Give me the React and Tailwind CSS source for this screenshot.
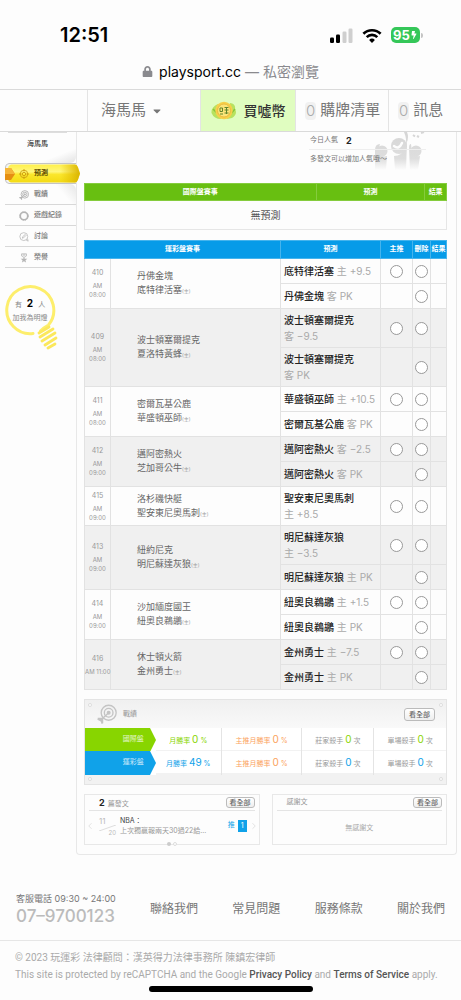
import { FaLock, FaCaretDown, FaBolt } from 'react-icons/fa';
import { LuChevronLeft, LuChevronRight } from 'react-icons/lu';
import clsx from 'clsx';

const games = [
  {
    no: '410', time: '08:00', away: '丹佛金塊', home: '底特律活塞',
    picks: [
      { team: '底特律活塞', side: '主', line: '+9.5', main: true },
      { team: '丹佛金塊', side: '客', line: 'PK' },
    ],
  },
  {
    no: '409', time: '08:00', away: '波士頓塞爾提克', home: '夏洛特黃蜂',
    picks: [
      { team: '波士頓塞爾提克', side: '客', line: '−9.5', main: true, wrap: true },
      { team: '波士頓塞爾提克', side: '客', line: 'PK', wrap: true },
    ],
  },
  {
    no: '411', time: '08:00', away: '密爾瓦基公鹿', home: '華盛頓巫師',
    picks: [
      { team: '華盛頓巫師', side: '主', line: '+10.5', main: true },
      { team: '密爾瓦基公鹿', side: '客', line: 'PK' },
    ],
  },
  {
    no: '412', time: '09:00', away: '邁阿密熱火', home: '芝加哥公牛',
    picks: [
      { team: '邁阿密熱火', side: '客', line: '−2.5', main: true },
      { team: '邁阿密熱火', side: '客', line: 'PK' },
    ],
  },
  {
    no: '415', time: '09:00', away: '洛杉磯快艇', home: '聖安東尼奧馬刺',
    picks: [{ team: '聖安東尼奧馬刺', side: '主', line: '+8.5', main: true, wrap: true }],
  },
  {
    no: '413', time: '09:00', away: '紐約尼克', home: '明尼蘇達灰狼',
    picks: [
      { team: '明尼蘇達灰狼', side: '主', line: '−3.5', main: true, wrap: true },
      { team: '明尼蘇達灰狼', side: '主', line: 'PK' },
    ],
  },
  {
    no: '414', time: '09:00', away: '沙加緬度國王', home: '紐奧良鵜鶘',
    picks: [
      { team: '紐奧良鵜鶘', side: '主', line: '+1.5', main: true },
      { team: '紐奧良鵜鶘', side: '主', line: 'PK' },
    ],
  },
  {
    no: '416', time: '11:00', oneLine: true, away: '休士頓火箭', home: '金州勇士',
    picks: [
      { team: '金州勇士', side: '主', line: '−7.5', main: true },
      { team: '金州勇士', side: '主', line: 'PK' },
    ],
  },
];

function StatusBar() {
  return (
    <div className="flex h-[58px] items-center justify-between pt-3 pr-[38px] pl-[60px]">
      <span className="text-[20px] leading-6 font-semibold text-black">12:51</span>
      <div className="flex items-center gap-[9px]">
        <svg viewBox="0 0 23 15" className="h-[15px] w-[23px]">
          <rect x="0" y="9.5" width="4" height="5.5" rx="1.2" fill="#000" />
          <rect x="6" y="6.5" width="4" height="8.5" rx="1.2" fill="#000" />
          <rect x="12.5" y="3.500" width="4" height="11.5" rx="1.2" fill="#cfcfcf" />
          <rect x="18.5" y="0.500" width="4" height="14.5" rx="1.2" fill="#cfcfcf" />
        </svg>
        <svg viewBox="0 0 20 15" className="h-[15px] w-5">
          <path d="M1.4 5.8A12.2 12.2 0 0 1 18.6 5.8" fill="none" stroke="#000" strokeWidth="2.7" />
          <path d="M4.7 9.1a7.5 7.5 0 0 1 10.6 0" fill="none" stroke="#000" strokeWidth="2.6" />
          <path d="M10 15l-2.9-3a4.1 4.1 0 0 1 5.8 0z" fill="#000" />
        </svg>
        <div className="flex items-center gap-px">
          <div className="flex h-4 w-[29px] items-center justify-center rounded-[5px] bg-[#35c759] text-white">
            <span className="text-[13px] leading-4 font-bold">95</span>
            <FaBolt className="size-2" />
          </div>
          <span className="h-[5px] w-[2px] rounded-r-full bg-[#c4c4c4]" />
        </div>
      </div>
    </div>
  );
}

function Coin() {
  return (
    <svg viewBox="0 0 26 19" className="h-[19px] w-[26px]">
      <path d="M7 3Q0 6 .5 12Q3 18 10 18zM19 2Q25 3 24 8Q27 13 21 17L16 18z" fill="#b7e25f" />
      <path d="M2 8L8 14M24 8L18 15" stroke="#86c63c" strokeWidth="1.5" />
      <circle cx="13" cy="9.5" r="8.7" fill="#f6d04a" />
      <circle cx="13" cy="9.5" r="6.5" fill="#fbe57a" stroke="#e6b238" strokeWidth=".8" />
      <path d="M9 7h2.5v3.500H9zM13.500 6.500h4M13.500 9h4M13.500 12h4M15.500 6v7M9 13h3" fill="none" stroke="#61832b" strokeWidth="1" />
    </svg>
  );
}

function TopNav() {
  return (
    <nav className="grid h-[43px] grid-cols-[88fr_113fr_95fr_93fr_72fr] divide-x divide-[#e4e4e4] border-y border-[#dadada] text-[15px] text-[#777]">
      <span />
      <button className="flex items-center gap-[5px] pl-[13px]">
        海馬馬
        <FaCaretDown className="size-3" />
      </button>
      <a href="#coin" className="flex items-center justify-center gap-[7px] bg-[#e0fdc0] text-[14px] font-medium text-[#333]">
        <Coin />
        買噓幣
      </a>
      <a href="#cart" className="flex items-center gap-1 pl-[9px] whitespace-nowrap">
        <span className="rounded-sm bg-[#f1f1f1] px-px leading-[18px] font-light text-[#aaa]">0</span>
        購牌清單
      </a>
      <a href="#messages" className="flex items-center gap-1 pl-[9px] whitespace-nowrap">
        <span className="rounded-sm bg-[#f1f1f1] px-px leading-[18px] font-light text-[#aaa]">0</span>
        訊息
      </a>
    </nav>
  );
}

function TargetIcon({ thin }) {
  return (
    <svg viewBox="0 0 24 24" className="size-full" fill="none" stroke="currentColor" strokeWidth={thin ? 1.6 : 2.2}>
      <circle cx="14" cy="10.5" r="9" />
      <circle cx="14" cy="10.5" r="5.2" />
      <circle cx="14" cy="10.5" r="1.6" fill="currentColor" />
      <path d="M14 10.5L5 19" />
      <path d="M1 16.500h6.500V23l-2 1-1-3-4-2z" fill="currentColor" stroke="none" />
    </svg>
  );
}

const menu = [
  { label: '戰績', icon: <TargetIcon /> },
  {
    label: '遊戲紀錄',
    icon: (
      <svg viewBox="0 0 24 24" className="size-full" fill="none" stroke="currentColor">
        <circle cx="12" cy="12" r="9" strokeWidth="4" />
        <circle cx="12" cy="12" r="10.500" strokeWidth="2" strokeDasharray="3 2.500" />
      </svg>
    ),
  },
  {
    label: '討論',
    icon: (
      <svg viewBox="0 0 24 24" className="size-full" fill="none" stroke="currentColor" strokeWidth="1.800">
        <circle cx="11.500" cy="11" r="9.500" />
        <path d="M17 19l5 3-1.500-6M8 15l1-4 6-5 2 2-6 6z" />
      </svg>
    ),
  },
  {
    label: '榮譽',
    icon: (
      <svg viewBox="0 0 24 24" className="size-full" fill="none" stroke="currentColor" strokeWidth="1.800">
        <path d="M6 2h12v5l-6 4-6-4zM10 2v6M14 2v6" />
        <path d="M12 10l2 4h6l-4.500 3.500L17 23l-5-3-5 3 1.500-5.500L4 14h6z" fill="currentColor" stroke="none" />
      </svg>
    ),
  },
];

function ActiveTab() {
  return (
    <a href="#predict" className="relative z-10 -mr-1 ml-[5px] flex h-[21px] items-center gap-[5px] pl-[14px] font-bold text-[#5c4a00]">
      <svg viewBox="0 0 75 21" preserveAspectRatio="none" className="absolute inset-0 size-full">
        <defs>
          <linearGradient id="tab" x1="0" y1="0" x2="0" y2="1">
            <stop offset="0" stopColor="#fff04a" />
            <stop offset=".4" stopColor="#fff77e" />
            <stop offset=".55" stopColor="#fbe72c" />
            <stop offset="1" stopColor="#f3da14" />
          </linearGradient>
          <linearGradient id="tabEdge" x1="0" y1="0" x2="1" y2="0">
            <stop offset="0" stopColor="#e3bb00" stopOpacity="0" />
            <stop offset="1" stopColor="#d9b400" />
          </linearGradient>
        </defs>
        <path d="M71 .5H4Q.5 1 .5 4v13q0 3 3.500 3.500h67" fill="#f3f3f3" stroke="#c4c4c4" />
        <path d="M6 1.500h64q2 0 3 3l2 6-2 6q-1 3-3 3H6q-3-1-3-4v-10q0-3 3-4z" fill="url(#tab)" />
        <path d="M55 1.500h15q2 0 3 3l2 6-2 6q-1 3-3 3H55z" fill="url(#tabEdge)" />
        <path d="M0 5h6l4 6-4 6H0z" fill="#e58f12" />
        <path d="M0 5h6l4 6H0z" fill="#f5b43a" />
      </svg>
      <svg viewBox="0 0 12 12" className="relative size-[10px]" fill="none" stroke="#cf9f10" strokeWidth="1.100">
        <circle cx="6" cy="6" r="4.500" />
        <circle cx="6" cy="6" r="2" />
        <path d="M6 0v3M6 9v3M0 6h3M9 6h3" />
      </svg>
      <span className="relative">預測</span>
    </a>
  );
}

function Sidebar() {
  return (
    <aside className="w-[76px] shrink-0 text-[7px] text-[#777]">
      <div className="mr-[9px] ml-2 border-t border-[#ddd]" />
      <div className="flex h-[30px] items-start rounded-br-md bg-linear-to-br from-[#fdfdfd] from-75% to-[#e2e2e2] pt-[5px] pl-[27px] leading-3 font-medium text-[#333]">
        海馬馬
      </div>
      <ActiveTab />
      <ul className="ml-[5px] rounded-tr-md bg-[linear-gradient(to_top_right,#fdfdfd_85%,#e6e6e6)]">
        {menu.map((item) => (
          <li key={item.label} className="border-b border-[#d8d8d8]">
            <a href="#menu" className="flex h-5 items-center gap-[5px] pt-px pl-[14px] font-medium">
              <span className="size-[10px] text-[#b5b5b5]">{item.icon}</span>
              {item.label}
            </a>
          </li>
        ))}
      </ul>
      <div className="relative mt-[17px] ml-[5px] h-[66px]">
        <svg viewBox="0 0 54 66" className="absolute h-[66px] w-[54px]" fill="none" strokeLinecap="round">
          <path d="M28 48.500A23.500 23.500 0 1 1 43.500 40Q38 43 35.500 46" stroke="#fdee6c" strokeWidth="3" />
          <path d="M34 48l10-6M35 52l13-8M37 56l13-8M40 60l11-7M43 63l7-4" stroke="#fbe85c" strokeWidth="2.800" />
        </svg>
        <div className="relative w-[50px] pt-3 text-center leading-[13px] text-[#888]">
          <p>有 <b className="px-[3px] text-[10px] text-black">2</b> 人</p>
          <p>加我為明燈</p>
        </div>
      </div>
    </aside>
  );
}

function Popularity() {
  return (
    <div className="flex h-[51px] justify-end">
      <div className="relative mr-[21px] w-[117px] text-[7px] text-[#777]">
        <svg viewBox="0 0 52 38" className="absolute top-0 right-0 h-[38px] w-[52px]">
          <defs>
            <linearGradient id="fade" gradientUnits="userSpaceOnUse" x1="0" y1="0" x2="0" y2="38">
              <stop offset="0" stopColor="#d6d6d6" />
              <stop offset=".7" stopColor="#dedede" />
              <stop offset="1" stopColor="#fdfdfd" />
            </linearGradient>
          </defs>
          <g fill="url(#fade)">
            <circle cx="25" cy="14" r="8" />
            <path d="M30 0h3q2 5 0 10l-1 28H21l-1-14q8 0 12-9 1-8-2-15z" />
            <circle cx="8" cy="19" r="5.500" />
            <path d="M1 38V18q0-6 5-6l-2 7q2 7 9 5l-1 14z" />
            <circle cx="42" cy="19" r="5.500" />
            <path d="M36 38l-1-22q0-4 2-4l1 8q4 5 8 4l-2 14z" />
          </g>
          <path d="M20 14q5 4 8-3" fill="none" stroke="#fdfdfd" strokeWidth="2.500" strokeLinecap="round" />
          <path d="M39 3l2 1.500M43 4l2 1M47 1l3-1" stroke="#d6d6d6" strokeWidth="2" />
        </svg>
        <p className="relative flex h-[18px] items-center gap-2 border-b border-[#eee] px-px">
          今日人氣 <b className="text-[9px] text-[#222]">2</b>
        </p>
        <p className="relative px-px leading-[17px] whitespace-nowrap">多發文可以增加人氣哦～</p>
      </div>
    </div>
  );
}

function IntlTable() {
  return (
    <table className="w-full table-fixed border-collapse text-[7px]">
      <colgroup>
        <col className="w-[64%]" />
        <col className="w-[30%]" />
        <col />
      </colgroup>
      <thead>
        <tr className="h-[17px] bg-[#68bf11] text-white">
          <th className="border border-[#85cc3d] p-0">國際盤賽事</th>
          <th className="border border-[#85cc3d] p-0">預測</th>
          <th className="border border-[#85cc3d] p-0">結果</th>
        </tr>
      </thead>
      <tbody>
        <tr className="h-[29px]">
          <td colSpan={3} className="border border-[#e6e6e6] p-0 text-center text-[10px] text-[#555]">無預測</td>
        </tr>
      </tbody>
    </table>
  );
}

const cell = 'border border-[#e2e2e2] p-0';
const head = 'border border-[#45b4ed] p-0 whitespace-nowrap';
const circle = 'mx-auto block size-[13px] appearance-none rounded-full border border-[#999] bg-white checked:border-4';

function GameTable() {
  return (
    <table className="mt-[10px] w-full table-fixed border-collapse text-[7px]">
      <colgroup>
        <col className="w-[26px]" />
        <col />
        <col className="w-[100px]" />
        <col className="w-8" />
        <col className="w-[18px]" />
        <col className="w-4" />
      </colgroup>
      <thead>
        <tr className="h-[18px] bg-[#069be8] text-white">
          <th className={head} colSpan={2}>運彩盤賽事</th>
          <th className={head}>預測</th>
          <th className={head}>主推</th>
          <th className={head}>刪除</th>
          <th className={head}>結果</th>
        </tr>
      </thead>
      {games.map((game, i) => (
        <tbody key={game.no} className={clsx(i % 2 === 1 && 'bg-[#f0f0f0]')}>
          {game.picks.map((pick, j) => (
            <tr key={pick.line} className={pick.wrap ? 'h-[39px]' : 'h-[25px]'}>
              {j === 0 && (
                <>
                  <td rowSpan={game.picks.length} className={clsx(cell, 'text-center text-[6px] leading-[9px] whitespace-nowrap text-[#999]')}>
                    <div className="mb-1 text-[7px]">{game.no}</div>
                    AM {!game.oneLine && <br />}
                    {game.time}
                  </td>
                  <td rowSpan={game.picks.length} className={clsx(cell, 'pl-[26px] text-[9px] leading-[14px] text-[#666]')}>
                    {game.away}
                    <br />
                    {game.home}
                    <span className="text-[5px] text-[#999]">(主)</span>
                  </td>
                </>
              )}
              <td className={clsx(cell, 'pl-[3px] text-[10px] leading-4 whitespace-nowrap')}>
                <span className="font-medium text-[#222]">{pick.team}</span>{' '}
                {pick.wrap && <br />}
                <span className="text-[#aaa]">{pick.side} {pick.line}</span>
              </td>
              <td className={cell}>
                {pick.main && <input type="radio" name="main" aria-label={`主推 ${pick.team}`} className={circle} />}
              </td>
              <td className={cell}>
                <input type="checkbox" aria-label={`刪除 ${pick.team}`} className={circle} />
              </td>
              <td className={cell} />
            </tr>
          ))}
        </tbody>
      ))}
    </table>
  );
}

function MoreButton() {
  return (
    <button className="rounded-[3px] border border-[#bbb] bg-linear-to-b from-white to-[#eee] px-[3px] text-[7px] leading-[9px] font-medium text-[#666]">
      看全部
    </button>
  );
}

const records = [
  { name: '國際盤', rate: '0', bg: 'bg-[#88d500]', arrow: 'text-[#88d500]', text: 'text-[#88d500]' },
  { name: '運彩盤', rate: '49', bg: 'bg-[#10a2e9]', arrow: 'text-[#10a2e9]', text: 'text-[#10a2e9]' },
];

function Record() {
  return (
    <section className="mt-[9px] border border-[#e4e4e4] bg-[#f2f2f2] text-[7px] text-[#999]">
      <header className="relative flex h-[28px] items-center bg-linear-to-b from-[#f0f0f0] to-[#f9f9f9] pr-[11px] pl-3">
        <span className="absolute top-[3px] left-[3px] size-1 rounded-full border border-[#ddd] bg-white" />
        <span className="absolute top-[3px] right-[3px] size-1 rounded-full border border-[#ddd] bg-white" />
        <span className="mr-[6px] size-5 text-[#c4c4c4]"><TargetIcon thin /></span>
        <h2 className="flex-1">戰績</h2>
        <button className="rounded-[3px] border border-[#bbb] bg-linear-to-b from-white to-[#eee] px-1 text-[7px] leading-[11px] font-medium text-[#666]">
          看全部
        </button>
      </header>
      {records.map((r) => (
        <div key={r.name} className="mb-px grid h-[22px] grid-cols-[71fr_66fr_81fr_72fr_72fr] divide-x divide-[#e4e4e4] bg-white text-center leading-[22px] whitespace-nowrap">
          <div className={clsx('relative border-r-0 pr-3 text-right text-[#ffffffcc]', r.bg)}>
            {r.name}
            <svg viewBox="0 0 6 22" preserveAspectRatio="none" className={clsx('absolute inset-y-0 right-0 h-full w-[6px]', r.arrow)}>
              <path d="M0 0h6v22H0z" fill="#fff" />
              <path d="M0 0l6 11-6 11z" fill="currentColor" />
            </svg>
          </div>
          <div className={r.text}>月勝率 <span className="text-[10px]">{r.rate}</span> %</div>
          <div className="text-[#fba25c]">主推月勝率 <span className="text-[10px]">0</span> %</div>
          <div>莊家殺手 <span className={clsx('text-[10px]', r.text)}>0</span> 次</div>
          <div>單場殺手 <span className={clsx('text-[10px]', r.text)}>0</span> 次</div>
        </div>
      ))}
      <div className="flex h-[10px] items-center justify-between px-[3px]">
        <span className="size-1 rounded-full border border-[#ddd] bg-white" />
        <span className="size-1 rounded-full border border-[#ddd] bg-white" />
      </div>
    </section>
  );
}

function Posts() {
  return (
    <div className="mt-[9px] grid grid-cols-2 gap-3 text-[7px] text-[#999]">
      <section className="relative h-[51px] border border-[#e8e8e8] px-1">
        <header className="flex h-4 items-center justify-between border-b border-[#e4e4e4] pl-[10px]">
          <h2><b className="mr-[3px] text-[9px] text-[#222]">2</b>篇發文</h2>
          <MoreButton />
        </header>
        <div className="flex h-[29px] items-center">
          <LuChevronLeft className="-ml-1 size-[10px] text-[#ddd]" />
          <div className="relative ml-1 h-5 w-[21px] text-[#bbb]">
            <span className="block text-[8px] leading-[10px]">11</span>
            <svg viewBox="0 0 17 6" className="absolute top-[9px] left-0 h-[6px] w-[17px]">
              <path d="M0 6L17 0" stroke="#ddd" />
            </svg>
            <span className="absolute right-1 bottom-0 text-[6px] leading-[6px]">20</span>
          </div>
          <div className="min-w-0 flex-1 leading-[10px]">
            <p className="text-[#444]">NBA：</p>
            <a href="#post" className="block whitespace-nowrap">上次獨贏報兩天30過22給...</a>
          </div>
          <span className="text-[#10a2e9]">推</span>
          <span className="mr-[2px] ml-[3px] bg-[#10a2e9] px-[3px] leading-3 text-white">1</span>
          <LuChevronRight className="-mr-1 size-[10px] text-[#ddd]" />
        </div>
        <div className="absolute inset-x-0 -bottom-[2px] flex justify-center gap-[2px]">
          <span className="size-[4px] rounded-full bg-[#ccc]" />
          <span className="size-[4px] rounded-full border border-[#ddd] bg-white" />
        </div>
      </section>
      <section className="h-[51px] border border-[#e8e8e8] px-1">
        <header className="flex h-4 items-center justify-between border-b border-[#e4e4e4] pl-[10px]">
          <h2>感謝文</h2>
          <MoreButton />
        </header>
        <p className="text-center leading-[33px] text-[#aaa]">無感謝文</p>
      </section>
    </div>
  );
}

function Footer() {
  return (
    <footer>
      <div className="mt-9 flex items-center justify-between px-4 text-[12px] text-[#777]">
        <div>
          <p className="text-[9px] leading-[15px]">客服電話 09:30 ~ 24:00</p>
          <p className="text-[17px] leading-5 font-medium text-[#bbb]">07–9700123</p>
        </div>
        <a href="#contact">聯絡我們</a>
        <a href="#faq">常見問題</a>
        <a href="#terms">服務條款</a>
        <a href="#about">關於我們</a>
      </div>
      <div className="mt-[14px] border-t border-[#e6e6e6] px-[15px] pt-[8px] font-[Roboto,'Noto_Sans_CJK_TC',sans-serif] text-[10px] leading-[17px] text-[#aaa]">
        <p>© 2023 玩運彩 法律顧問：漢英得力法律事務所 陳鎮宏律師</p>
        <p>
          This site is protected by reCAPTCHA and the Google{' '}
          <a href="#privacy" className="font-medium text-[#555]">Privacy Policy</a> and{' '}
          <a href="#tos" className="font-medium text-[#555]">Terms of Service</a> apply.
        </p>
      </div>
      <div className="mx-auto mt-[3px] mb-[9px] h-[6px] w-[164px] rounded-full bg-black" />
    </footer>
  );
}

export default function App() {
  return (
    <div className="overflow-x-hidden bg-[#fdfdfd] font-[Inter,'Noto_Sans_CJK_TC',sans-serif]">
      <StatusBar />
      <div className="flex h-[31px] items-start justify-center gap-[6px] text-[14px] leading-7 text-black">
        <FaLock className="mt-2 size-[11px] text-[#8a8a8e]" />
        <span>playsport.cc <span className="text-[#8a8a8e]">— 私密瀏覽</span></span>
      </div>
      <TopNav />
      <div className="flex">
        <Sidebar />
        <main className="mr-1 min-w-0 flex-1 rounded-b-[4px] border border-t-0 border-[#e8e8e8] pr-[9px] pb-[9px] pl-[7px]">
          <Popularity />
          <IntlTable />
          <GameTable />
          <Record />
          <Posts />
        </main>
      </div>
      <Footer />
    </div>
  );
}
